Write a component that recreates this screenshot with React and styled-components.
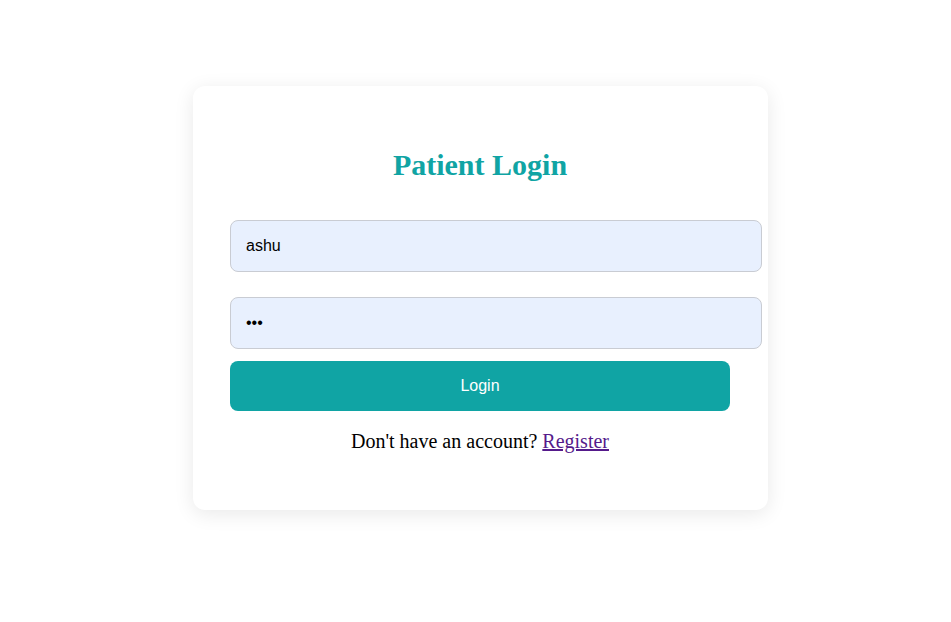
import React from 'react'
import styled, { createGlobalStyle } from 'styled-components'

const GlobalStyle = createGlobalStyle`
  html, body {
    margin: 0;
    padding: 0;
    background: #ffffff;
  }
  body {
    font-family: "Liberation Serif", "Times New Roman", serif;
  }
`

const Page = styled.div`
  min-height: 622px;
  display: flex;
  justify-content: center;
  align-items: flex-start;
  padding: 86px 0 0 10px;
  box-sizing: border-box;
`

const Card = styled.div`
  width: 500px;
  padding: 62px 38px 57px 37px;
  background: #ffffff;
  border-radius: 12px;
  box-shadow: 0 4px 20px rgba(0, 0, 0, 0.09);
`

const Title = styled.h2`
  margin: 0 0 38px;
  text-align: center;
  color: #10a4a4;
  font-size: 30px;
  line-height: 34px;
  font-weight: bold;
`

const Form = styled.form`
  display: flex;
  flex-direction: column;
  align-items: flex-start;
`

const Input = styled.input`
  width: 100%;
  height: 19px;
  padding: 15px 15px 16px;
  margin-bottom: ${(p) => p.$gap}px;
  border: 1px solid #c9ccd3;
  border-radius: 8px;
  background: #e8f0fe;
  font-family: "Liberation Sans", Arial, sans-serif;
  font-size: 16px;
  color: #000;
  outline: none;
`

const Button = styled.button`
  width: 100%;
  height: 50px;
  border: none;
  border-radius: 8px;
  background: #10a4a4;
  color: #ffffff;
  font-family: "Liberation Sans", Arial, sans-serif;
  font-size: 16px;
  cursor: pointer;
`

const Footer = styled.p`
  margin: 19px 0 0;
  text-align: center;
  font-size: 20px;
  line-height: 23px;
  color: #000;

  & a {
    color: #551a8b;
  }
`

const App = () => {
  return (
    <>
      <GlobalStyle />
      <Page>
        <Card>
          <Title>Patient Login</Title>
          <Form onSubmit={(e) => e.preventDefault()}>
            <Input type="text" defaultValue="ashu" $gap={25} />
            <Input type="password" defaultValue="abc" $gap={12} />
            <Button type="submit">Login</Button>
          </Form>
          <Footer>
            Don't have an account? <a href="#register">Register</a>
          </Footer>
        </Card>
      </Page>
    </>
  )
}

export default App
